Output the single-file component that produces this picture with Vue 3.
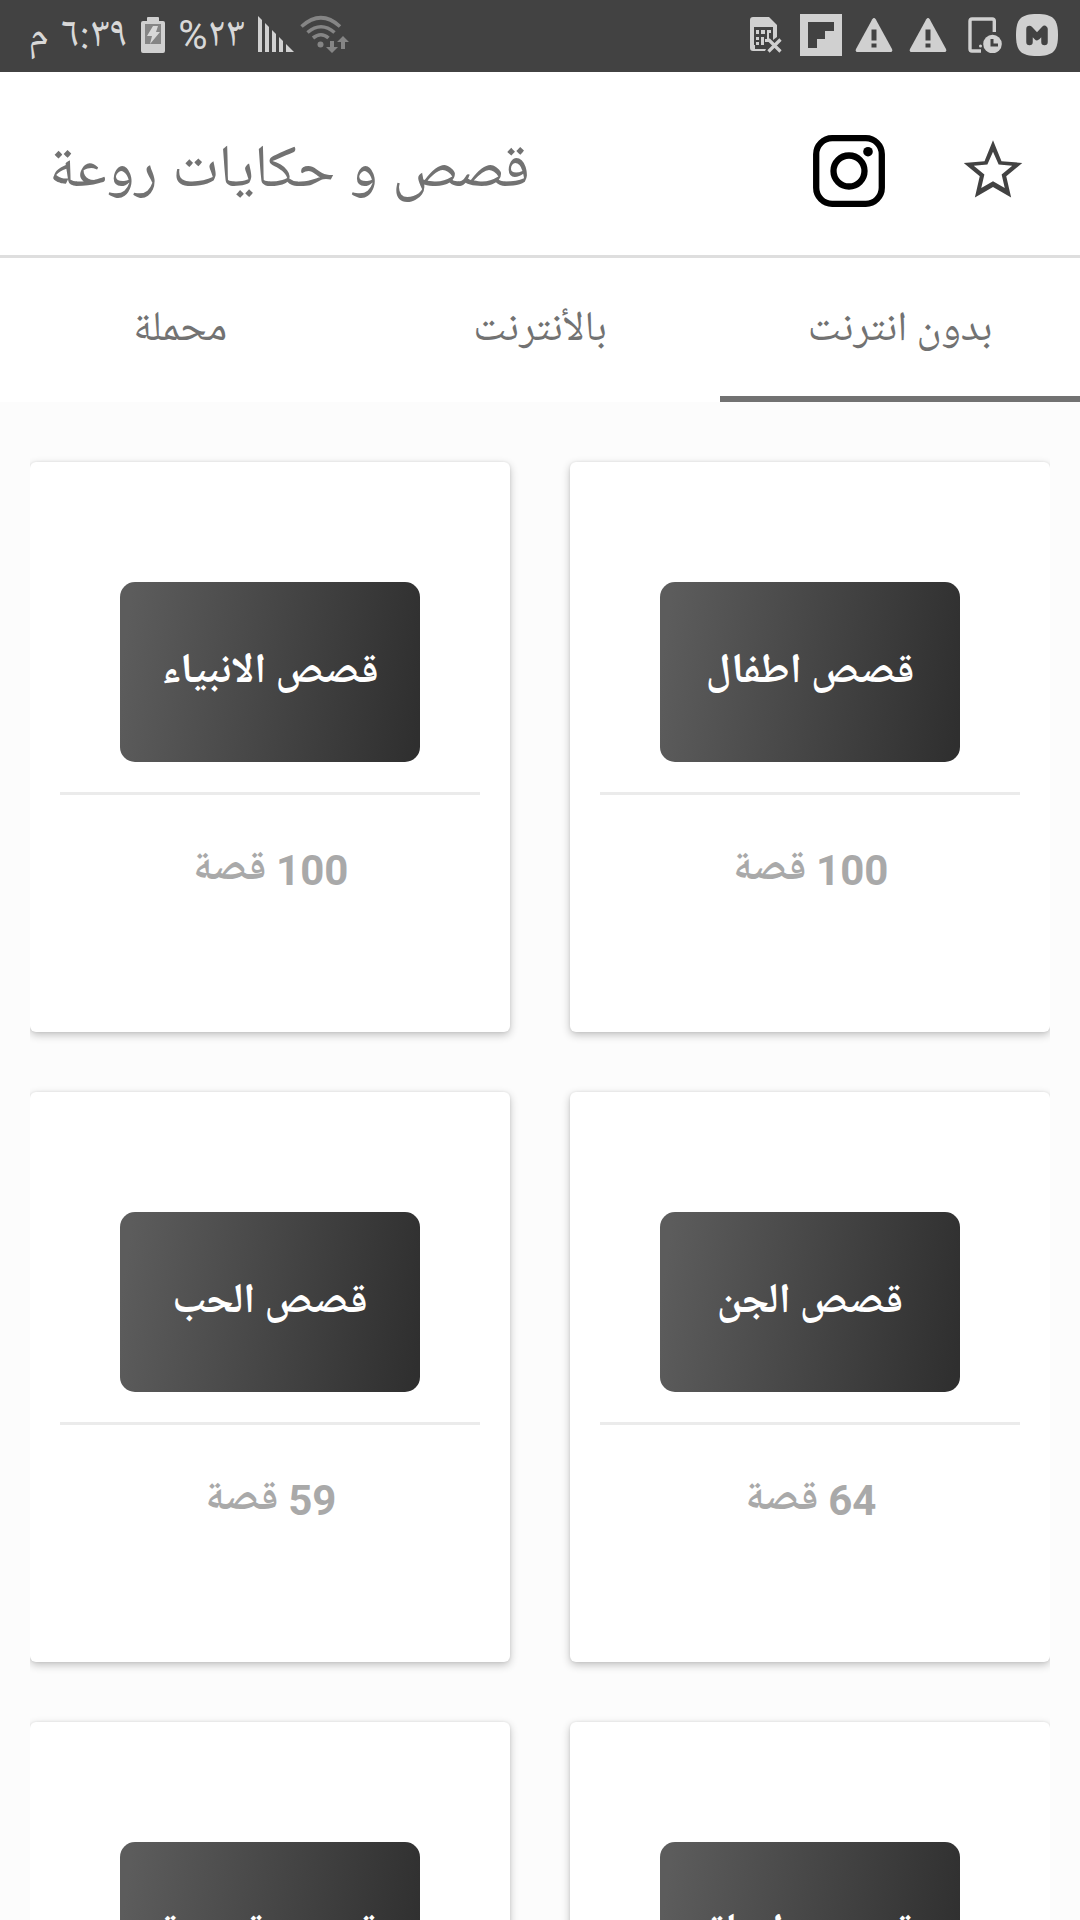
<script setup>
const tabs = [
  { label: 'محملة' },
  { label: 'بالأنترنت' },
  { label: 'بدون انترنت', active: true },
]

const cards = [
  { title: 'قصص الانبياء', count: '100' },
  { title: 'قصص اطفال', count: '100' },
  { title: 'قصص الحب', count: '59' },
  { title: 'قصص الجن', count: '64' },
  { title: 'قصص قصيرة', count: '40' },
  { title: 'قصص طويلة', count: '30' },
]
</script>

<template>
  <div class="screen">
    <header class="status">
      <div class="status-side left">
        <span class="s-am">م</span>
        <span class="s-time" dir="rtl">٦:٣٩</span>
        <svg class="s-batt" width="24" height="36" viewBox="0 0 24 36">
          <path fill="#d0d0d0" d="M6 1q0-1 1-1h10q1 0 1 1v3h4q2 0 2 2v28q0 2-2 2H2q-2 0-2-2V6q0-2 2-2h4z" />
          <path fill="#858585" d="M4 7h16v20H4z" />
          <path fill="#d8d8d8" d="M12 9h5l-2 6h4L9 27l2-8H6z" />
        </svg>
        <span class="s-pct">%</span>
        <span class="s-num">٢٣</span>
        <svg class="s-sig" width="36" height="36" viewBox="0 0 36 36" fill="#d0d0d0">
          <path d="M0 0l4 4v32H0zM7 7l4 4v25H7zM14 14l4 4v18h-4zM21 21l4 4v11h-4zM28 28l8 8h-8z" />
        </svg>
        <svg class="s-wifi" width="50" height="38" viewBox="0 0 50 38">
          <g fill="none" stroke="#858585" stroke-width="3.6">
            <path d="M1.500 11.500Q21-6 40 11.500" />
            <path d="M7.500 17.500Q21 6 34.500 17.500" />
            <path d="M13 23Q21 16.500 28.500 23" />
          </g>
          <circle cx="20.500" cy="29.500" r="3" fill="#858585" />
          <path fill="#858585" d="M30 26h4v6h4l-6 6-6-6h4zM41 34v-7h-4l6-6 6 6h-4v7z" />
        </svg>
      </div>
      <div class="status-side right">
        <svg width="33" height="36" viewBox="0 0 33 36">
          <path fill="#d0d0d0" fill-rule="evenodd" d="M3 0h16l8 8v12l-4 3v-9H5v18h11l-1 2H3q-3 0-3-3V3q0-3 3-3z" />
          <path fill="#424242" d="M4 10h19v18H4z" />
          <path fill="#d0d0d0" d="M6 13h3v4H6zM6 20h3v3H6zM6 25h3v3H6zM11 13h4v4h-4zM11 20h3v8h-3zM17 13h4v3h-2v9h-4v-3h2z" />
          <path stroke="#d0d0d0" stroke-width="3.200" d="M18.500 22.500l12 12m0-12l-12 12" />
        </svg>
        <svg class="s-flip" width="42" height="42" viewBox="0 0 42 42">
          <path fill="#d0d0d0" d="M0 0h42v42H0z" />
          <path fill="#424242" d="M8 8h26v9h-9v8h-8v9H8z" />
        </svg>
        <svg v-for="n in 2" :key="n" class="warn" width="38" height="34" viewBox="0 0 38 34">
          <path fill="#d0d0d0" d="M17.300 1.200q1.700-2.200 3.400 0L37 31q1 3-1.500 3h-33Q0 34 1 31z" />
          <path fill="#424242" d="M16.500 11.500h5v11h-5zM16.500 25.500h5v4h-5z" />
        </svg>
        <svg class="s-phone" width="34" height="36" viewBox="0 0 34 36">
          <path fill="none" stroke="#d0d0d0" stroke-width="3.400" d="M26.300 15V4q0-2-2-2H4Q2 2 2 4v28q0 2 2 2h9" />
          <circle cx="12.500" cy="29" r="1.500" fill="#d0d0d0" />
          <circle cx="24.500" cy="27" r="9.300" fill="#d0d0d0" />
          <path fill="none" stroke="#424242" stroke-width="3" d="M24 22v6h6" />
        </svg>
        <svg class="s-m" width="42" height="42" viewBox="0 0 42 42">
          <path fill="#d0d0d0" d="M21 0C37 0 42 5 42 21S37 42 21 42 0 37 0 21 5 0 21 0z" />
          <path fill="none" stroke="#424242" stroke-width="6.500" stroke-linecap="round" stroke-linejoin="round" d="M13.500 28V15l7.500 8 7.500-8v13" />
        </svg>
      </div>
    </header>

    <div class="appbar">
      <span class="app-title" dir="rtl">قصص و حكايات روعة</span>
      <div class="actions">
        <svg width="72" height="72" viewBox="0 0 72 72">
          <g fill="none" stroke="#000" stroke-width="6.300">
            <rect x="3.200" y="3.200" width="65.600" height="65.600" rx="16" />
            <circle cx="36" cy="36" r="15.500" />
          </g>
          <circle cx="55" cy="16.700" r="4.800" />
        </svg>
        <svg class="star" width="60" height="60" viewBox="0 0 24 24" fill="#424242">
          <path d="M23.700 9.600l-8.300-.750L12 .500 8.600 8.850.300 9.600l6.400 5.250L4.750 23.400 12 19.200l7.250 4.200-1.950-8.550zM12 16.900l-4.700 2.700 1.250-5.400-4.250-3.500 5.450-.500L12 5.100l2.250 5.100 5.450.500-4.250 3.500 1.250 5.400z" />
        </svg>
      </div>
    </div>

    <nav class="tabs">
      <div v-for="t in tabs" :key="t.label" class="tab" :class="{ active: t.active }" dir="rtl">{{ t.label }}</div>
    </nav>

    <main class="list">
      <article v-for="c in cards" :key="c.title" class="card">
        <div class="tile" dir="rtl">{{ c.title }}</div>
        <div class="rule"></div>
        <div class="count">
          <span class="unit">قصة</span>
          <span class="num">{{ c.count }}</span>
        </div>
      </article>
    </main>
  </div>
</template>

<style>
html,
body {
  margin: 0;
  overflow: hidden;
}
</style>

<style scoped>
.screen {
  width: 1080px;
  height: 1920px;
  overflow: hidden;
  display: flex;
  flex-direction: column;
  background: #fcfcfc;
  font-family: 'Noto Naskh Arabic UI', 'Noto Naskh Arabic', Roboto, 'DejaVu Sans', sans-serif;
}
.status {
  flex: none;
  height: 72px;
  box-sizing: border-box;
  padding: 0 22px 0 29px;
  background: #424242;
  color: #d8d8d8;
  display: flex;
  justify-content: space-between;
  font-size: 42px;
  line-height: 70px;
}
.status-side {
  display: flex;
  align-items: center;
}
.status-side span {
  flex: none;
  display: flex;
  justify-content: center;
  white-space: nowrap;
}
.status-side svg {
  flex: none;
}
.s-am { width: 19px; margin-right: 12px; }
.s-time { width: 69px; font-size: 43px; }
.s-batt { margin: 0 15px 2px 12px; }
.s-pct { width: 26px; font-family: Roboto, sans-serif; font-size: 40px; margin-right: 1px; }
.s-num { width: 38px; }
.s-sig { margin: 0 6px 4px 13px; }
.s-wifi { margin-bottom: 4px; }
.right { gap: 16px; }
.right svg { margin-bottom: 2px; }
.right .s-flip { margin-left: 1px; margin-right: -3px; }
.right .s-phone { margin-left: 5px; }
.right .s-m { margin-left: -2px; }
.appbar {
  flex: none;
  height: 183px;
  border-bottom: 3px solid #dedede;
  background: #fff;
  display: flex;
  align-items: center;
  justify-content: space-between;
  padding: 0 57px 0 50px;
}
.app-title {
  width: 480px;
  padding-top: 14px;
  color: #727272;
  font-size: 60px;
  line-height: 80px;
  word-spacing: 1.200px;
  text-align: center;
  white-space: nowrap;
}
.actions {
  display: flex;
  align-items: center;
  gap: 78px;
  padding-top: 15px;
}
.star {
  margin-bottom: 5px;
}
.tabs {
  flex: none;
  height: 144px;
  background: #fff;
  display: flex;
}
.tab {
  flex: 1;
  box-sizing: border-box;
  padding-top: 5px;
  border-bottom: 6px solid transparent;
  display: flex;
  align-items: center;
  justify-content: center;
  color: #727272;
  font-size: 42px;
}
.tab.active {
  border-bottom-color: #727272;
}
.list {
  flex: none;
  margin: 0 30px;
  padding-top: 60px;
  display: grid;
  grid-template-columns: 480px 480px;
  gap: 60px;
  overflow: hidden;
}
.card {
  height: 570px;
  box-sizing: border-box;
  padding: 120px 30px 0;
  border-radius: 6px;
  background: #fff;
  box-shadow: 0 3px 8px rgba(0, 0, 0, 0.24), 0 0 3px rgba(0, 0, 0, 0.08);
}
.tile {
  width: 300px;
  height: 180px;
  box-sizing: border-box;
  padding-bottom: 2px;
  margin: 0 auto;
  border-radius: 15px;
  background: linear-gradient(98deg, #5c5c5c 4%, #2f2f2f 98%);
  color: #fff;
  font-size: 42px;
  font-weight: 700;
  display: flex;
  align-items: center;
  justify-content: center;
}
.rule {
  height: 3px;
  margin-top: 30px;
  background: #ebebeb;
}
.count {
  margin-top: 44px;
  display: flex;
  justify-content: center;
  align-items: baseline;
  gap: 11.500px;
  color: #a9a9a9;
  font-size: 42px;
  font-weight: 700;
  line-height: 60px;
}
.unit {
  width: 73px;
}
.num {
  font: 700 42px/60px Roboto, sans-serif;
}
</style>
